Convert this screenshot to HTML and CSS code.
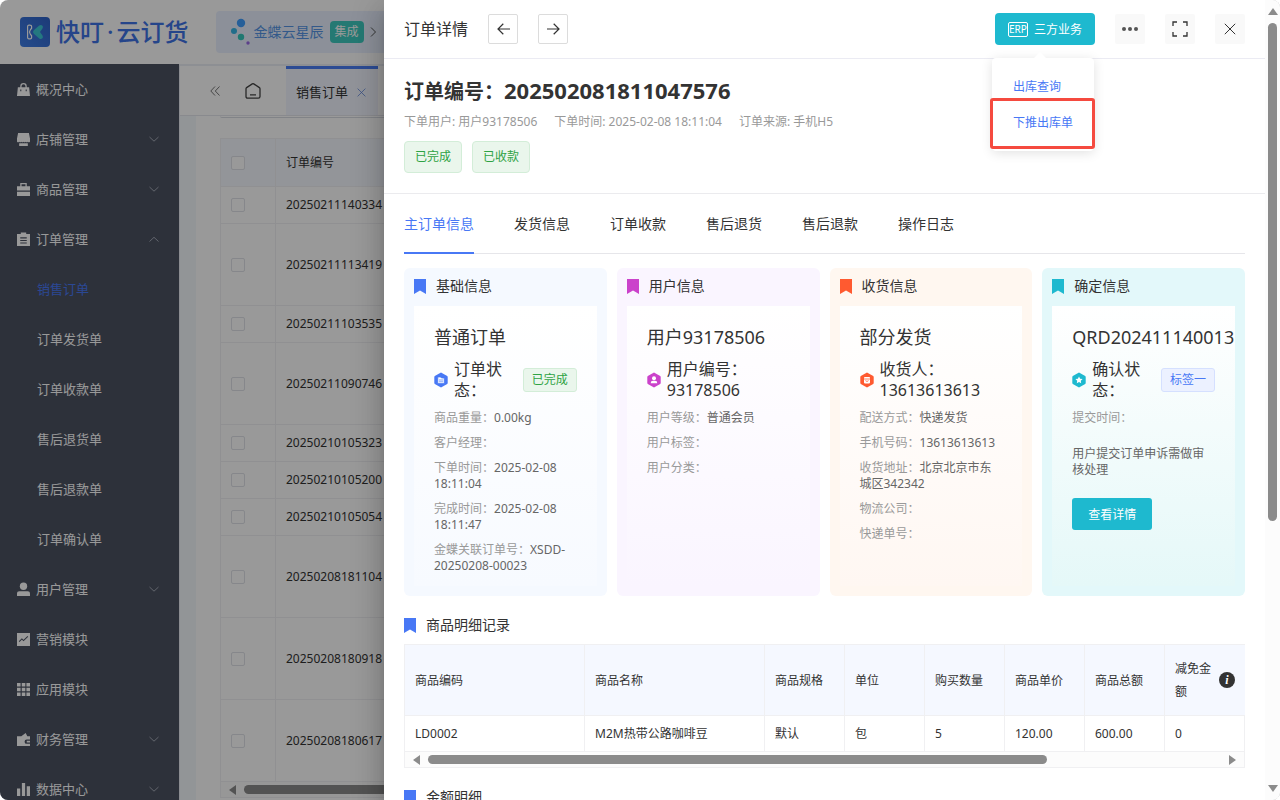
FILE: index.html
```html
<!DOCTYPE html>
<html lang="zh-CN">
<head>
    <meta charset="UTF-8">
    <meta name="viewport" content="width=device-width, initial-scale=1.0">
    <title>订单详情</title>
    <link rel="stylesheet" href="styles.css">
</head>
<body>
    <!-- Shared icons -->
    <svg class="icon-defs" aria-hidden="true">
        <symbol id="bookmark" viewBox="0 0 12 15"><path d="M0 0h12v15l-6-3.6L0 15z" fill="currentColor"/></symbol>
        <symbol id="down" viewBox="0 0 10 10"><path d="M.5 3l4.500 4.200L9.500 3" fill="none" stroke="currentColor"/></symbol>
        <symbol id="up" viewBox="0 0 10 10"><path d="M.5 7.500l4.500-4.200 4.500 4.200" fill="none" stroke="currentColor"/></symbol>
        <symbol id="close" viewBox="0 0 12 12"><path d="M.8.8l10.400 10.400M11.200.8L.8 11.200" fill="none" stroke="currentColor"/></symbol>
        <symbol id="hex" viewBox="0 0 14 16"><path d="M7 .6l6.200 3.500q.5.300.5.900v6q0 .6-.5.900L7 15.400.8 11.900q-.5-.3-.5-.9V5q0-.6.500-.9z" fill="currentColor"/></symbol>
    </svg>

    <div class="window">
        <header class="topbar">
            <a class="brand" href="#">
                <svg width="30" height="30" viewBox="0 0 30 30" aria-hidden="true">
                    <defs>
                        <linearGradient id="logo-bg" x1="0" y1="1" x2="1" y2="0"><stop offset="0" stop-color="#3f7fe8"/><stop offset="1" stop-color="#2f63c8"/></linearGradient>
                    </defs>
                    <rect width="30" height="30" rx="4" fill="url(#logo-bg)"/>
                    <path d="M9.800 8.200H9q-1.400 0-1.400 1.400v10.800q0 1.400 1.400 1.400h1.200q1.400 0 1.400-1.400v-1.600l-1.300-1.600q-1.600-2.200 0-4.400l1.300-1.600V9.600q0-1.400-1.800-1.400z" fill="none" stroke="#fff" stroke-width="1.200"/>
                    <path d="M19.200 8.600q1.500-1.200 3-.2 1.300 1.200.4 2.800L20 15l2.600 3.800q.9 1.600-.4 2.800-1.500 1-3-.2l-5.400-4.600q-1.800-1.800 0-3.600z" fill="#3cc8d6"/>
                </svg>
                <span>快叮<i>·</i>云订货</span>
            </a>
            <a class="integration" href="#">
                <svg width="20" height="28" viewBox="0 0 20 28" aria-hidden="true">
                    <circle cx="11" cy="5" r="4.200" fill="#409eff"/>
                    <circle cx="4" cy="13" r="3" fill="#38b6e6"/>
                    <circle cx="11" cy="19" r="3.200" fill="#36c9bd"/>
                    <circle cx="18" cy="25" r="1.700" fill="#9a6be6"/>
                </svg>
                <span>金蝶云星辰</span>
                <b>集成</b>
                <svg width="7" height="12" viewBox="0 0 7 12" aria-hidden="true"><path d="M1 1.500L5.500 6 1 10.500" fill="none" stroke="#555"/></svg>
            </a>
        </header>

        <div class="body">
            <nav class="sidebar">
                <ul>
                    <li><a href="#"><svg class="menu-icon" viewBox="0 0 12 12"><path d="M3 4V3a3 3 0 0 1 6 0v1h2.200L12 12H0l.8-8zm1.200 0h3.600V3a1.800 1.800 0 0 0-3.600 0zM3 6v1.500h1V6zm5 0v1.500h1V6z"/></svg>概况中心</a></li>
                    <li><a href="#"><svg class="menu-icon" viewBox="0 0 12 12"><path d="M1 0h10l1 5v3q-1 1-2 0-1 1-2 0-1 1-2 0-1 1-2 0-1 1-2 0-1 1-2 0V5zM2 9.500h8V12H2z"/></svg>店铺管理<svg class="arrow"><use href="#down"/></svg></a></li>
                    <li><a href="#"><svg class="menu-icon" viewBox="0 0 12 12"><path fill-rule="evenodd" d="M3 3V0h6v3h3v4H0V3zm1.200 0h3.600V1.200H4.200zM0 8h12v4H0z"/></svg>商品管理<svg class="arrow"><use href="#down"/></svg></a></li>
                    <li><a href="#"><svg class="menu-icon" viewBox="0 0 12 12"><path fill-rule="evenodd" d="M0 1h3.500v-1.500h5V1H12v11H0zM3 4v1h6V4zm0 2.400v1h6v-1zm0 2.400v1h6v-1z"/></svg>订单管理<svg class="arrow"><use href="#up"/></svg></a>
                        <ul class="submenu">
                            <li><a class="current" href="#">销售订单</a></li>
                            <li><a href="#">订单发货单</a></li>
                            <li><a href="#">订单收款单</a></li>
                            <li><a href="#">售后退货单</a></li>
                            <li><a href="#">售后退款单</a></li>
                            <li><a href="#">订单确认单</a></li>
                        </ul>
                    </li>
                    <li><a href="#"><svg class="menu-icon" viewBox="0 0 12 12"><circle cx="6" cy="3" r="3.400"/><path d="M0 12V9.500Q0 7.500 2 7.500h8q2 0 2 2V12z"/></svg>用户管理<svg class="arrow"><use href="#down"/></svg></a></li>
                    <li><a href="#"><svg class="menu-icon" viewBox="0 0 12 12"><path d="M0 0h12v12H0z"/><path d="M2 8l2.500-2.500 1.500 1.500L10 3.200" fill="none" stroke="#4b5262"/></svg>营销模块</a></li>
                    <li><a href="#"><svg class="menu-icon" viewBox="0 0 12 12"><path d="M0 0h3.300v3.300H0zM4.400 0h3.300v3.300H4.400zM8.700 0H12v3.300H8.700zM0 4.400h3.300v3.300H0zM4.400 4.400h3.300v3.300H4.400zM8.700 4.400H12v3.300H8.700zM0 8.700h3.300V12H0zM4.400 8.700h3.300V12H4.400zM8.700 8.700H12V12H8.700z"/></svg>应用模块</a></li>
                    <li><a href="#"><svg class="menu-icon" viewBox="0 0 12 12"><path d="M0 3h4l4-3 1.500 3H12v3H9a2 2 0 0 0 0 4h3v2H0zM9 7.200h3v1.600H9z"/></svg>财务管理<svg class="arrow"><use href="#down"/></svg></a></li>
                    <li><a href="#"><svg class="menu-icon" viewBox="0 0 12 12"><path d="M0 5h3v7H0zM4.500 0h3v12h-3zM9 3h3v9H9z"/></svg>数据中心<svg class="arrow"><use href="#down"/></svg></a></li>
                </ul>
            </nav>

            <main class="main">
                <div class="pagetabs">
                    <svg width="10" height="10" viewBox="0 0 10 10" aria-hidden="true"><path d="M5 .5L.8 5 5 9.500M9.500.5L5.300 5l4.200 4.500" fill="none" stroke="#777"/></svg>
                    <svg width="16" height="16" viewBox="0 0 16 16" aria-hidden="true"><path d="M1 5.800Q1 5 1.600 4.600L7.300.9q.7-.4 1.400 0l5.700 3.700q.6.400.6 1.200V13.500q0 1.700-1.700 1.700H2.700Q1 15.200 1 13.500zM5 11.800h6" fill="none" stroke="#444" stroke-width="1.300"/></svg>
                    <a class="pagetab" href="#">销售订单<svg width="9" height="9"><use href="#close"/></svg></a>
                </div>
                <div class="content">
                    <div class="filter"></div>
                    <div class="orders-box">
                        <table class="orders">
                            <thead>
                                <tr><th class="check"><input type="checkbox" aria-label="全选"></th><th>订单编号</th></tr>
                            </thead>
                            <tbody>
                                <tr><td class="check"><input type="checkbox" aria-label="选择"></td><td>20250211140334</td></tr>
                                <tr class="tall"><td class="check"><input type="checkbox" aria-label="选择"></td><td>20250211113419</td></tr>
                                <tr><td class="check"><input type="checkbox" aria-label="选择"></td><td>20250211103535</td></tr>
                                <tr class="tall"><td class="check"><input type="checkbox" aria-label="选择"></td><td>20250211090746</td></tr>
                                <tr><td class="check"><input type="checkbox" aria-label="选择"></td><td>20250210105323</td></tr>
                                <tr><td class="check"><input type="checkbox" aria-label="选择"></td><td>20250210105200</td></tr>
                                <tr><td class="check"><input type="checkbox" aria-label="选择"></td><td>20250210105054</td></tr>
                                <tr class="tall"><td class="check"><input type="checkbox" aria-label="选择"></td><td>20250208181104</td></tr>
                                <tr class="tall"><td class="check"><input type="checkbox" aria-label="选择"></td><td>20250208180918</td></tr>
                                <tr class="tall"><td class="check"><input type="checkbox" aria-label="选择"></td><td>20250208180617</td></tr>
                            </tbody>
                        </table>
                        <div class="hscroll" aria-hidden="true"><span class="tri left"></span><span class="thumb"></span><span class="tri right"></span></div>
                    </div>
                </div>
            </main>
        </div>

        <div class="mask"></div>

        <section class="drawer" role="dialog" aria-labelledby="drawer-title">
            <div class="drawer-main">
                <header class="drawer-head">
                    <h1 id="drawer-title">订单详情</h1>
                    <button class="nav-btn" aria-label="上一单"><svg width="13" height="12" viewBox="0 0 13 12"><path d="M13 6H1M6.300.8L1 6l5.300 5.200" fill="none" stroke="currentColor" stroke-width="1.200"/></svg></button>
                    <button class="nav-btn" aria-label="下一单"><svg width="13" height="12" viewBox="0 0 13 12"><path d="M0 6h12M6.700.8L12 6l-5.300 5.200" fill="none" stroke="currentColor" stroke-width="1.200"/></svg></button>
                    <div class="actions">
                        <div class="erp">
                            <button class="primary erp-btn"><span class="erp-icon">ERP</span>三方业务</button>
                            <ul class="popover">
                                <li><a href="#">出库查询</a></li>
                                <li class="marked"><a href="#">下推出库单</a></li>
                            </ul>
                        </div>
                        <button class="icon-btn" aria-label="更多"><svg width="16" height="4" viewBox="0 0 16 4"><circle cx="2" cy="2" r="2"/><circle cx="8" cy="2" r="2"/><circle cx="14" cy="2" r="2"/></svg></button>
                        <button class="icon-btn" aria-label="全屏"><svg width="16" height="16" viewBox="0 0 16 16"><path d="M1 5V1h4M11 1h4v4M15 11v4h-4M5 15H1v-4" fill="none" stroke="currentColor" stroke-width="1.300"/></svg></button>
                        <button class="icon-btn" aria-label="关闭"><svg width="12" height="12"><use href="#close"/></svg></button>
                    </div>
                </header>

                <div class="summary">
                    <h2>订单编号：<span>202502081811047576</span></h2>
                    <p class="meta"><span>下单用户: 用户93178506</span><span>下单时间: 2025-02-08 18:11:04</span><span>订单来源: 手机H5</span></p>
                    <div class="tags"><span class="tag">已完成</span><span class="tag">已收款</span></div>
                </div>

                <div class="detail">
                    <nav class="tabs">
                        <a class="active" href="#">主订单信息</a>
                        <a href="#">发货信息</a>
                        <a href="#">订单收款</a>
                        <a href="#">售后退货</a>
                        <a href="#">售后退款</a>
                        <a href="#">操作日志</a>
                    </nav>

                    <div class="cards">
                        <article class="card blue">
                            <h3><svg class="bookmark"><use href="#bookmark"/></svg>基础信息</h3>
                            <div class="panel">
                                <h4>普通订单</h4>
                                <div class="status">
                                    <svg viewBox="0 0 14 16"><use href="#hex"/><path d="M3.800 5h2.700l1 1h2.700v5.500H3.800zM5 8h4M5 9.800h4" fill="#fff" stroke="currentColor" stroke-width=".7"/></svg>
                                    <span>订单状态：</span><em class="tag small">已完成</em>
                                </div>
                                <p><span class="key">商品重量：</span>0.00kg</p>
                                <p><span class="key">客户经理：</span></p>
                                <p><span class="key">下单时间：</span>2025-02-08 18:11:04</p>
                                <p><span class="key">完成时间：</span>2025-02-08 18:11:47</p>
                                <p><span class="key">金蝶关联订单号：</span>XSDD-20250208-00023</p>
                            </div>
                        </article>
                        <article class="card purple">
                            <h3><svg class="bookmark"><use href="#bookmark"/></svg>用户信息</h3>
                            <div class="panel">
                                <h4>用户93178506</h4>
                                <div class="status">
                                    <svg viewBox="0 0 14 16"><use href="#hex"/><circle cx="7" cy="6.200" r="2" fill="#fff"/><path d="M3.700 11.200q0-2.400 2.300-2.400h2q2.300 0 2.300 2.400z" fill="#fff"/></svg>
                                    <span>用户编号：93178506</span>
                                </div>
                                <p><span class="key">用户等级：</span>普通会员</p>
                                <p><span class="key">用户标签：</span></p>
                                <p><span class="key">用户分类：</span></p>
                            </div>
                        </article>
                        <article class="card orange">
                            <h3><svg class="bookmark"><use href="#bookmark"/></svg>收货信息</h3>
                            <div class="panel">
                                <h4>部分发货</h4>
                                <div class="status">
                                    <svg viewBox="0 0 14 16"><use href="#hex"/><rect x="4" y="5" width="6" height="6.400" rx=".8" fill="#fff"/><path d="M4 7h6M5.500 8.600q1.500 1.800 3 0" fill="none" stroke="currentColor" stroke-width=".8"/></svg>
                                    <span>收货人：13613613613</span>
                                </div>
                                <p><span class="key">配送方式：</span>快递发货</p>
                                <p><span class="key">手机号码：</span>13613613613</p>
                                <p><span class="key">收货地址：</span>北京北京市东城区342342</p>
                                <p><span class="key">物流公司：</span></p>
                                <p><span class="key">快递单号：</span></p>
                            </div>
                        </article>
                        <article class="card cyan">
                            <h3><svg class="bookmark"><use href="#bookmark"/></svg>确定信息</h3>
                            <div class="panel">
                                <h4>QRD202411140013</h4>
                                <div class="status">
                                    <svg viewBox="0 0 14 16"><use href="#hex"/><path d="M7 4.400l1.100 2.300 2.500.3-1.800 1.800.4 2.500L7 10.100l-2.200 1.200.4-2.500L3.400 7l2.500-.3z" fill="#fff"/></svg>
                                    <span>确认状态：</span><em class="tag small info">标签一</em>
                                </div>
                                <p><span class="key">提交时间：</span></p>
                                <p class="note">用户提交订单申诉需做审核处理</p>
                                <button class="primary">查看详情</button>
                            </div>
                        </article>
                    </div>

                    <h3 class="section-title"><svg class="bookmark"><use href="#bookmark"/></svg>商品明细记录</h3>
                    <div class="goods-box">
                        <table class="goods">
                            <colgroup><col class="wide"><col class="wide"><col><col><col><col><col><col></colgroup>
                            <thead>
                                <tr>
                                    <th>商品编码</th><th>商品名称</th><th>商品规格</th><th>单位</th><th>购买数量</th><th>商品单价</th><th>商品总额</th>
                                    <th><div class="with-info"><span>减免金额</span><i class="info-icon">i</i></div></th>
                                </tr>
                            </thead>
                            <tbody>
                                <tr><td>LD0002</td><td>M2M热带公路咖啡豆</td><td>默认</td><td>包</td><td>5</td><td>120.00</td><td>600.00</td><td>0</td></tr>
                            </tbody>
                        </table>
                        <div class="hscroll" aria-hidden="true"><span class="tri left"></span><span class="track"><span class="thumb"></span></span><span class="tri right"></span></div>
                    </div>

                    <h3 class="section-title"><svg class="bookmark"><use href="#bookmark"/></svg>金额明细</h3>
                </div>
            </div>
            <div class="vscroll" aria-hidden="true"><span class="tri up"></span><span class="track"><span class="thumb"></span></span><span class="tri down"></span></div>
        </section>
    </div>
</body>
</html>
```
FILE: styles.css
```css
* { box-sizing: border-box; }
body {
    margin: 0; background: #fff; color: #333;
    font-family: "Noto Sans", "Noto Sans CJK SC", sans-serif; font-size: 12px; line-height: 16px;
}
ul { list-style: none; margin: 0; padding: 0; }
h1, h2, h3, h4, p { margin: 0; font-weight: normal; }
a { color: inherit; text-decoration: none; }
i, em { font-style: normal; }
svg { display: block; flex-shrink: 0; }
button { font-family: inherit; font-size: 12px; border: none; padding: 0; cursor: pointer; display: flex; align-items: center; justify-content: center; }
table { border-collapse: separate; border-spacing: 0; width: 100%; }
th, td { text-align: left; font-weight: normal; }
.icon-defs { position: absolute; width: 0; height: 0; }

.window {
    position: relative; height: 100vh; overflow: hidden; border-radius: 8px; background: #fff;
    display: flex; flex-direction: column;
}

/* Top bar */
.topbar {
    height: 64px; flex-shrink: 0; padding-left: 20px; display: flex; align-items: center; gap: 27px;
}
.brand { display: flex; align-items: center; gap: 6px; font-size: 24px; font-weight: 500; line-height: 32px; color: #3f73e6; white-space: nowrap; }
.brand i { padding: 0 3px; }
.integration {
    height: 42px; width: 260px; padding: 0 14px; display: flex; align-items: center;
    background: #e9f1ff; border-radius: 4px; font-size: 14px; color: #5595e6;
}
.integration span { margin: 0 6px 0 4px; }
.integration b {
    font-weight: normal; font-size: 12px; line-height: 22px; padding: 0 5px; margin-right: 6px; background: #3fcac0; color: #fff; border-radius: 4px;
}

.body { flex: 1; min-height: 0; display: flex; }

/* Sidebar */
.sidebar { width: 179px; flex-shrink: 0; background: #4b5262; color: #fff; font-size: 13px; overflow: hidden; }
.sidebar a { height: 50px; padding: 0 20px 0 17px; display: flex; align-items: center; }
.sidebar .submenu a { padding: 0 0 0 37px; }
.sidebar .current { color: #4878f5; }
.menu-icon { width: 13px; height: 13px; margin-right: 6px; fill: currentColor; overflow: visible; }
.arrow { width: 10px; height: 10px; margin-left: auto; color: #a4a9b5; }

/* Order list behind the drawer */
.main { flex: 1; min-width: 0; background: #f4f8fc; border-top: 2px solid #ebeef5; border-left: 1px solid #e6e9f0; }
.pagetabs {
    height: 50px; padding-left: 30px; display: flex; align-items: center; gap: 25px; background: #fff; border-bottom: 1px solid #e4e7ed;
}
.pagetab {
    height: 49px; padding: 0 12px 0 10px; display: flex; align-items: center; gap: 9px;
    border-top: 3px solid #4a7df5; background: #f2f6ff; font-size: 13px;
}
.pagetab svg { color: #5a80d8; }
.content { margin-left: 16px; padding-left: 24px; background: #fff; min-height: 100%; }
.filter { height: 2px; border-bottom: 1px solid #d8dbe2; border-radius: 0 0 0 4px; margin-bottom: 20px; }
.orders-box { border: 1px solid #f0f1f4; }
.orders th, .orders td { height: 37px; padding: 0 10px; border-bottom: 1px solid #f0f1f4; vertical-align: middle; line-height: 20px; }
.orders th { height: 48px; background: #f5f8ff; }
.orders .tall td { height: 82px; }
.orders .check { width: 55px; border-right: 1px solid #f0f1f4; }
.orders input {
    display: block; appearance: none; width: 14px; height: 14px; margin: 0; border: 1px solid #dfe2e8; border-radius: 2px; background: #fff;
}

/* Scrollbars */
.hscroll { height: 15px; padding: 0 8px; display: flex; align-items: center; gap: 8px; background: #fcfcfc; }
.vscroll { width: 15px; padding: 8px 0; flex-shrink: 0; display: flex; flex-direction: column; align-items: center; gap: 8px; background: #fcfcfc; }
.track { flex: 1; display: flex; }
.thumb { flex: 1; background: #8b8b8b; border-radius: 5px; }
.hscroll .thumb { height: 9px; }
.hscroll .track .thumb { flex: 0 0 78%; }
.vscroll .track { flex-direction: column; }
.vscroll .thumb { width: 9px; flex: 0 0 66%; }
.tri { border: 5px solid transparent; }
.tri.left { border-right: 7px solid #8b8b8b; border-left: 0; }
.tri.right { border-left: 7px solid #8b8b8b; border-right: 0; }
.tri.up { border-bottom: 7px solid #8b8b8b; border-top: 0; }
.tri.down { border-top: 7px solid #8b8b8b; border-bottom: 0; }

/* Drawer */
.mask { position: absolute; inset: 0; background: rgba(0,0,0,.4); }
.drawer {
    position: absolute; top: 0; right: 0; bottom: 0; width: 70%; display: flex; background: #fff;
    box-shadow: 0 8px 10px -5px rgba(0,0,0,.2), 0 16px 24px 2px rgba(0,0,0,.14), 0 6px 30px 5px rgba(0,0,0,.12);
}
.drawer-main { flex: 1; min-width: 0; overflow: hidden; }
.drawer-head { height: 59px; padding: 0 20px; display: flex; align-items: center; gap: 20px; border-bottom: 1px solid #ebebf3; }
.drawer-head h1 { font-size: 16px; line-height: 24px; }
.nav-btn { width: 30px; height: 30px; background: #fff; border: 1px solid #dcdcdc; border-radius: 2px; color: #333; }
.actions { margin-left: auto; display: flex; align-items: center; gap: 20px; }
.icon-btn { width: 30px; height: 30px; background: #f9f9f9; border-radius: 2px; color: #333; }
.icon-btn circle { fill: #555; }
.primary { height: 32px; padding: 0 16px; background: #1eb9cf; color: #fff; border-radius: 3px; }
.erp { position: relative; }
.erp-btn { width: 100px; padding: 0; gap: 6px; border-radius: 4px; }
.erp-icon { border: 1px solid #fff; border-radius: 2px; font-size: 10px; line-height: 13px; width: 20px; display: flex; justify-content: center; }
.popover {
    position: absolute; z-index: 1; top: 45px; left: -3px; width: 102px; padding: 11px 0 10px; background: #fff; border-radius: 4px;
    box-shadow: 0 2px 12px rgba(0,0,0,.12); color: #4878f5;
}
.popover::before {
    content: ""; position: absolute; top: -6px; left: 42px; border: 6px solid transparent; border-top: 0; border-bottom-color: #fff;
}
.popover a { display: block; padding-left: 21px; line-height: 36px; white-space: nowrap; }
.marked { position: relative; }
.marked::after { content: ""; position: absolute; inset: -7px -1px -8px -2px; border: 3px solid #f54a3f; border-radius: 3px; pointer-events: none; }

.summary { padding: 20px; border-bottom: 1px solid #ebebee; }
.summary h2 { height: 28px; font-size: 20px; line-height: 26px; font-weight: bold; }
.summary h2 span { font-size: 22px; line-height: 20px; }
.meta { display: flex; gap: 17px; margin-top: 6px; line-height: 18px; color: #999; }
.tags { display: flex; gap: 10px; margin-top: 10px; }
.tag { padding: 0 10px; line-height: 30px; color: #2fa344; background: #eaf6ec; border: 1px solid #d3edd8; border-radius: 4px; white-space: nowrap; }
.tag.small { padding: 0 8px; line-height: 22px; border-radius: 3px; }
.tag.info { color: #4878f5; background: #ecf1ff; border-color: #d5e0ff; }

.detail { padding: 0 20px; }
.tabs { display: flex; gap: 40px; height: 60px; font-size: 14px; line-height: 60px; box-shadow: inset 0 -1px #e6e6ea; }
.tabs .active { color: #4878f5; border-bottom: 2px solid #4878f5; }

/* Info cards */
.cards { display: grid; grid-template-columns: repeat(4, minmax(0, 1fr)); gap: 10px; margin-top: 14px; }
.card { padding: 8px 10px 10px; border-radius: 6px; display: flex; flex-direction: column; }
.card h3, .section-title { display: flex; align-items: center; gap: 10px; font-size: 14px; line-height: 20px; }
.card h3 { margin-bottom: 10px; }
.bookmark { width: 12px; height: 15px; color: #4878f5; }
.panel { flex: 1; padding: 19px 20px 12px; color: #666; }
.panel h4 { font-size: 18px; line-height: 24px; color: #333; }
.panel p { margin-top: 9px; }
.key { color: #999; }
.status { display: flex; align-items: center; margin-top: 10px; font-size: 16px; line-height: 21px; color: #333; }
.status svg { width: 14px; height: 16px; margin-right: 6px; }
.status span { flex: 1; }
.status .tag { margin-left: 10px; font-size: 12px; }
.panel .note { margin: 20px 0; }
.blue { background: #f5f9ff; }
.blue .panel { background: linear-gradient(#fff, #f7faff); }
.blue .status svg { color: #4878f5; }
.purple { background: #faf5ff; }
.purple .panel { background: linear-gradient(#fff, #faf5ff); }
.purple .bookmark, .purple .status svg { color: #cb42cb; }
.orange { background: #fff7f0; }
.orange .panel { background: linear-gradient(#fff, #fff7f2); }
.orange .bookmark, .orange .status svg { color: #ff5a30; }
.cyan { background: #e3f8fa; }
.cyan .panel { background: linear-gradient(#fff, #e5f8f8); }
.cyan .bookmark, .cyan .status svg { color: #1eb9cf; }

/* Goods table */
.section-title { padding-top: 19px; margin-bottom: 9px; }
.goods-box { border: 1px solid #f0f0f2; }
.goods { table-layout: fixed; }
.goods col { width: 80px; }
.goods .wide { width: 180px; }
.goods th, .goods td { border-right: 1px solid #f0f0f2; border-bottom: 1px solid #f0f0f2; line-height: 23px; }
.goods th { padding: 12px 10px; background: #f5f8ff; }
.goods td { padding: 6px 10px; }
.goods th:last-child, .goods td:last-child { border-right: none; }
.with-info { display: flex; align-items: center; gap: 6px; }
.info-icon {
    flex: 0 0 16px; height: 16px; border-radius: 50%; background: #333; color: #fff; text-align: center;
    font: italic bold 12px/16px "Liberation Serif", serif;
}
```
